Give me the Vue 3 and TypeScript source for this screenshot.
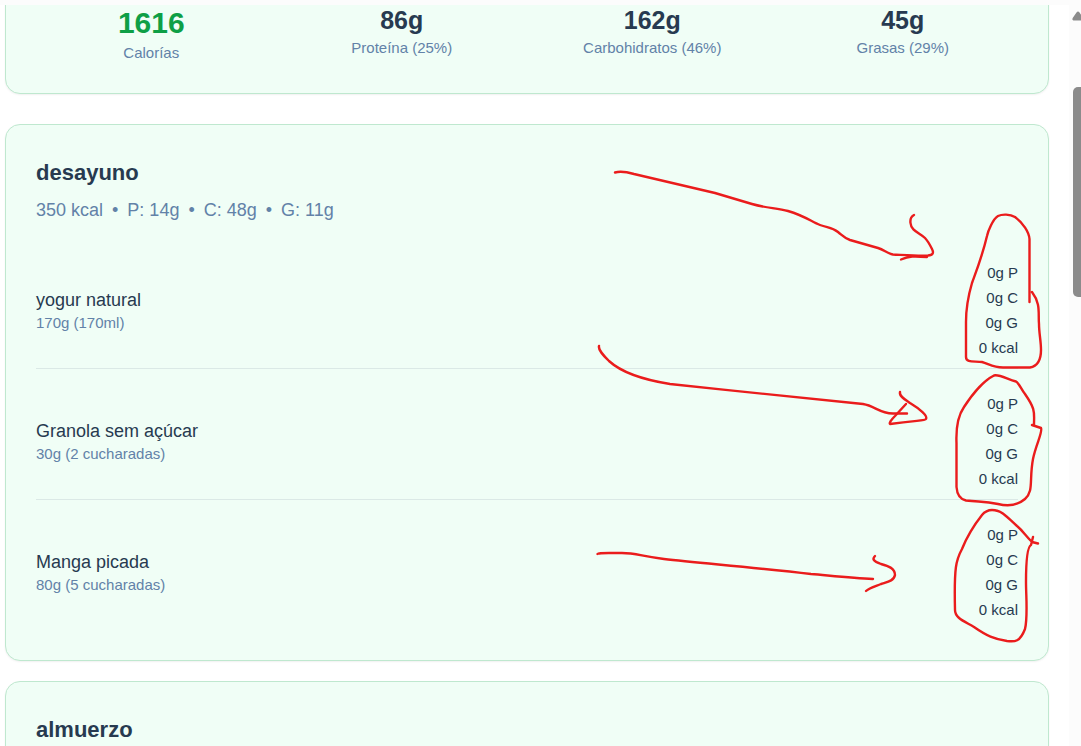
<script setup lang="ts">
interface Total {
  value: string
  label: string
  main?: boolean
}

interface Food {
  name: string
  amount: string
  facts: string[]
}

interface Meal {
  name: string
  macros: string[]
  foods: Food[]
}

const totals: Total[] = [
  { value: '1616', label: 'Calorías', main: true },
  { value: '86g', label: 'Proteína (25%)' },
  { value: '162g', label: 'Carbohidratos (46%)' },
  { value: '45g', label: 'Grasas (29%)' },
]

const emptyFacts = ['0g P', '0g C', '0g G', '0 kcal']

const meals: Meal[] = [
  {
    name: 'desayuno',
    macros: ['350 kcal', 'P: 14g', 'C: 48g', 'G: 11g'],
    foods: [
      { name: 'yogur natural', amount: '170g (170ml)', facts: emptyFacts },
      { name: 'Granola sem açúcar', amount: '30g (2 cucharadas)', facts: emptyFacts },
      { name: 'Manga picada', amount: '80g (5 cucharadas)', facts: emptyFacts },
    ],
  },
  { name: 'almuerzo', macros: [], foods: [] },
]

// Freehand pen strokes drawn over the meal list
const strokes: string[] = [
  'M615 172.500C620 171 627 172 634 174L715 193L752 204C765 208 777 208 788 211C805 216 812 222 820 225C828 228 832 227 838 232C843 236 844 238 850 240L878 248C884 250 889 254 893 254.500C904 255 918 256 928 255.500C933 255 934 253 932 249C930 245 928 241 925 238C920 233 911 231 910.500 223C910 219 912 216 914 215',
  'M901 259.500C909 256 914 256 927 257',
  'M1029.500 302L1029.500 239C1029 232 1023 223 1015 217C1010 214 1002 214 998 216C993 219 988 231 987 236C982 257 976 272 972 283C967 300 966 311 966 322L966 357C966 363 974 361 982 362C989 364 993 367.500 1003 367.500H1030C1038 366 1041 360 1041 350C1041 341 1039 333 1039 324C1038 313 1041 304 1032 292',
  'M599 346C598 350 603 355 609 361C621 372 645 380 670 384C735 391 803 398 863 404C875 406 879 413 893 413.500L907 413.500',
  'M900 392C899 396 904 399 910 403C920 409 928 416 926 419C925 421 918 420 890 424C889 423 891 420 895 416L906 404',
  'M1032 425L1041 428C1043 432 1036 444 1033 459C1029 480 1034 491 1025 499C1018 505 1010 507 998 504C985 501 981 502 966 500.500C959 499 957 494 956.500 487V443C956 431 957 417 964 407C971 396 983 381 994 375.500C999 374 1007 379 1016 381.500C1019 383 1021 389 1025 394C1036 410 1034 412 1034 425',
  'M597.500 554C599 552.500 603 553 622 553C635 553 641 556 664 559C700 563 760 568 811 574C834 576 853 578 873 579',
  'M875 556C872 559 873 561 881 564C888 566 895 568 895 575C894 581 887 582 881 584C873 587 869 588 866 591',
  'M1038 543.500L1032 542C1025 535 1023 531 1017 526C1009 519 1003 512 998 511C992 509 986 510 982 515C971 529 966 539 962 549C956 560 954 567 955 610C955 618 964 621 974 627C987 636 994 639 1007 641C1015 642 1020 642 1025 629C1028 617 1026 596 1026 582C1026 563 1027 547 1031 545L1033 537',
]
</script>

<template>
  <div class="page">
    <div class="pane">
      <main class="content">
        <section class="card totals">
          <div v-for="t in totals" :key="t.label" class="total">
            <div class="value" :class="{ main: t.main }">{{ t.value }}</div>
            <div class="label">{{ t.label }}</div>
          </div>
        </section>

        <section v-for="meal in meals" :key="meal.name" class="card meal">
          <h2>{{ meal.name }}</h2>
          <p class="macros">
            <template v-for="(macro, i) in meal.macros" :key="macro">
              <span v-if="i > 0">•</span>
              <span>{{ macro }}</span>
            </template>
          </p>
          <ul class="foods">
            <li v-for="food in meal.foods" :key="food.name" class="food">
              <div>
                <div class="food-name">{{ food.name }}</div>
                <div class="label">{{ food.amount }}</div>
              </div>
              <div class="facts">
                <div v-for="fact in food.facts" :key="fact">{{ fact }}</div>
              </div>
            </li>
          </ul>
        </section>
      </main>
      <div class="scrollbar" aria-hidden="true">
        <svg class="arrow" width="12" height="10" viewBox="0 0 12 10">
          <path d="M4.500 9.500Q2.500 9 4 6.500L7.500 1.500Q9 -0.500 10.500 1.500L14 6.500Q16 9 14 9.500Z" fill="#8b8b8b" />
        </svg>
        <div class="thumb"></div>
      </div>
    </div>
    <svg class="ink" width="1081" height="746" viewBox="0 0 1081 746" aria-hidden="true">
      <path v-for="(d, i) in strokes" :key="i" :d="d" />
    </svg>
  </div>
</template>

<style>
body {
  margin: 0;
  background: #fff;
}
</style>

<style scoped>
.page {
  position: relative;
  box-sizing: border-box;
  height: 100vh;
  padding-top: 5px;
  overflow: hidden;
  background: #fcfcfc;
  color: #273a50;
  font-family: "Liberation Sans", Arial, sans-serif;
}

.pane {
  display: flex;
  height: 100%;
  overflow: hidden;
}

.content {
  flex: 1;
  min-width: 0;
  margin-top: -33px;
  padding: 0 20px 0 5px;
  background: #fff;
}

.card {
  padding: 30px;
  border: 1px solid #bfe8cf;
  border-radius: 15px;
  background: #f0fef6;
  box-shadow: 0 1px 2px rgba(0, 0, 0, 0.06);
}

.totals {
  display: grid;
  grid-template-columns: repeat(4, 1fr);
  gap: 20px;
  margin-bottom: 30px;
  text-align: center;
}

.value {
  font-size: 25px;
  line-height: 35px;
  font-weight: 700;
}

.value.main {
  color: #0e9f46;
  font-size: 30px;
  line-height: 40px;
}

.label {
  color: #6282a8;
  font-size: 15px;
  line-height: 20px;
}

.meal {
  margin-bottom: 20px;
}

h2 {
  margin: 0;
  font-size: 22px;
  line-height: 35px;
}

.macros {
  display: flex;
  gap: 9px;
  min-height: 25px;
  margin: 8px 0 15px;
  color: #6282a8;
  font-size: 18px;
  line-height: 25px;
}

.foods {
  margin: 0;
  padding: 0;
  list-style: none;
}

.food {
  display: flex;
  align-items: center;
  justify-content: space-between;
  padding: 22px 0 8px;
}

.food:not(:last-child) {
  border-bottom: 1px solid #dbe9e6;
}

.food-name {
  font-size: 18px;
  line-height: 25px;
}

.facts {
  font-size: 15px;
  line-height: 25px;
  text-align: right;
}

.scrollbar {
  width: 12px;
  overflow: hidden;
  background: #fcfcfc;
}

.arrow {
  display: block;
  margin-top: 6px;
}

.thumb {
  height: 210px;
  margin: 66px 0 0 4px;
  border-radius: 5px 0 0 5px;
  background: #8b8b8b;
}

.ink {
  position: absolute;
  top: 0;
  left: 0;
  fill: none;
  stroke: #ea1c1c;
  stroke-width: 2.4;
  stroke-linecap: round;
  stroke-linejoin: round;
  pointer-events: none;
}
</style>
